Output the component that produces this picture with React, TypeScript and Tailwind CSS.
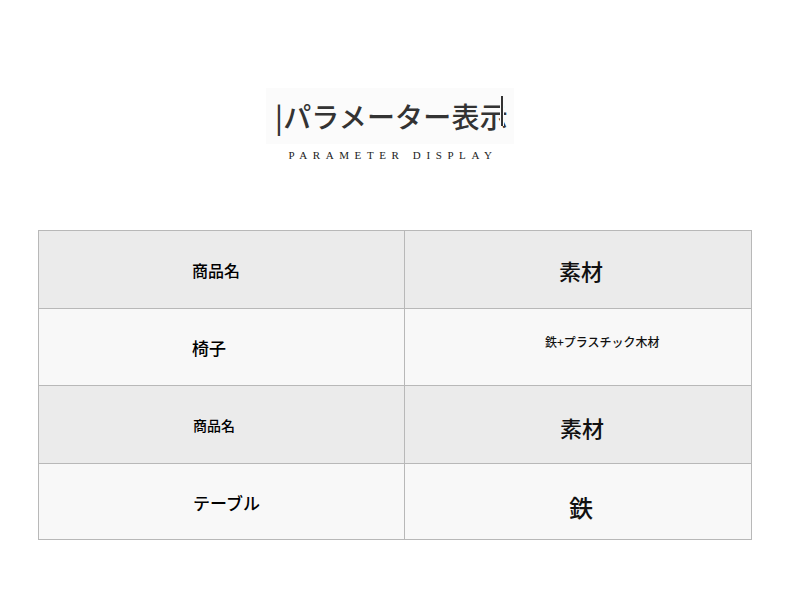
const rows = [
  {
    bg: "bg-[#ebebeb]",
    left: { text: "商品名", cls: "pl-[153px] text-[16px] pt-[1px]" },
    right: { text: "素材", cls: "pl-[154px] text-[22px] pt-[3px]" },
  },
  {
    bg: "bg-[#f8f8f8]",
    left: { text: "椅子", cls: "pl-[153px] text-[17px] pt-[3px]" },
    right: { text: "鉄+プラスチック木材", cls: "pl-[140px] text-[12px] pb-[10px]" },
  },
  {
    bg: "bg-[#ebebeb]",
    left: { text: "商品名", cls: "pl-[154px] text-[14px] pt-[2px]" },
    right: { text: "素材", cls: "pl-[155px] text-[22px] pt-[6px]" },
  },
  {
    bg: "bg-[#f8f8f8]",
    left: { text: "テーブル", cls: "pl-[154px] text-[17px] pt-[4px]" },
    right: { text: "鉄", cls: "pl-[164px] text-[24px] pt-[12px]" },
  },
];

const heights = ["h-[77px]", "h-[77px]", "h-[78px]", "h-[76px]"];

export default function App() {
  return (
    <div
      className="w-[790px] h-[598px] bg-white overflow-hidden"
      style={{ fontFamily: '"Noto Sans CJK JP", "Noto Sans", sans-serif' }}
    >
      <div className="flex flex-col items-center pt-[88px]">
        <div className="relative mr-[10px] bg-[#fbfbfb] pl-[9px] pr-[6px] h-[56px] flex items-center">
          <span className="text-[28px] text-[#333] font-medium leading-none tracking-[0.2px]">
            |パラメーター表示
          </span>
          <span className="absolute right-[10px] top-[8px] w-[4px] h-[30px] bg-[#fbfbfb]" />
          <span className="absolute right-[11px] top-[8px] w-[2px] h-[30px] bg-[#333]" />
        </div>
        <div
          className="mt-[3px] text-[11px] text-[#222] tracking-[5.6px] pr-[4px]"
          style={{ fontFamily: '"Liberation Serif", serif' }}
        >
          PARAMETER DISPLAY
        </div>
      </div>

      <div className="mt-[66px] ml-[38px] w-[714px] border border-[#b8b8b8]">
        {rows.map((r, i) => (
          <div
            key={i}
            className={`flex ${heights[i]} ${r.bg} ${i > 0 ? "border-t border-[#b8b8b8]" : ""}`}
          >
            <div
              className={`w-[366px] border-r border-[#b8b8b8] flex items-center text-black font-medium ${r.left.cls}`}
            >
              {r.left.text}
            </div>
            <div className={`flex-1 flex items-center text-[#111] font-medium ${r.right.cls}`}>
              {r.right.text}
            </div>
          </div>
        ))}
      </div>
    </div>
  );
}
